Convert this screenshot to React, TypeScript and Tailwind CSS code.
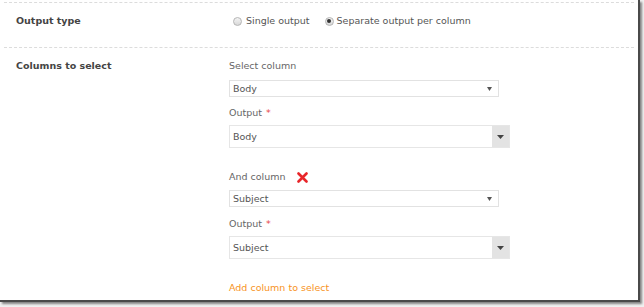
import React from "react";

const font = { fontFamily: '"DejaVu Sans", Verdana, sans-serif' };

function Radio({ checked }: { checked?: boolean }) {
  return (
    <span className="w-[9px] h-[9px] rounded-full border border-[#b5b5b5] bg-gradient-to-b from-[#f4f4f4] to-[#d8d8d8] flex items-center justify-center">
      {checked && <span className="w-[4px] h-[4px] rounded-full bg-[#333]" />}
    </span>
  );
}

function SmallSelect({ value }: { value: string }) {
  return (
    <div className="w-[270px] h-[17px] border border-[#e2e2e2] bg-white flex items-center justify-between pl-[3px] pr-[6px]">
      <span className="text-[#555]">{value}</span>
      <svg width="5" height="4" viewBox="0 0 5 4">
        <path d="M0 0h5L2.5 4z" fill="#555" />
      </svg>
    </div>
  );
}

function Combo({ value }: { value: string }) {
  return (
    <div className="w-[281px] h-[23px] border border-[#e6e6e6] bg-white flex">
      <span className="flex-1 flex items-center pl-[3px] text-[#555]">{value}</span>
      <span className="w-[17px] bg-[#e3e3e3] flex items-center justify-center">
        <svg width="7" height="4" viewBox="0 0 7 4">
          <path d="M0 0h7L3.5 4z" fill="#444" />
        </svg>
      </span>
    </div>
  );
}

function FieldLabel({ text, required }: { text: string; required?: boolean }) {
  return (
    <div className="h-4 flex items-center text-[#666]">
      {text}
      {required && <span className="ml-[4px] text-[#e8454a]">*</span>}
    </div>
  );
}

export default function App() {
  return (
    <div className="w-[644px] h-[307px] bg-[#f0f0f0] text-[9.5px] leading-4" style={font}>
      <div className="w-[640px] h-[302px] bg-white border-r-[2px] border-b-[2px] border-[#4a4a4a] shadow-[2px_2px_2px_rgba(0,0,0,0.45)] pt-[2px] px-[4px]">
        {/* OUTPUT TYPE */}
        <div className="border-t border-dashed border-[#dcdcdc] pt-[10px] pb-[18px] flex">
          <div className="w-[225px] pl-[12px] font-bold text-[#444]">Output type</div>
          <div className="ml-[4px] flex items-center text-[#555]">
            <Radio />
            <span className="ml-[4px]">Single output</span>
            <span className="ml-[15px]" />
            <Radio checked />
            <span className="ml-[3px]">Separate output per column</span>
          </div>
        </div>

        {/* COLUMNS */}
        <div className="border-t border-dashed border-[#dcdcdc] pt-[10px] flex">
          <div className="w-[225px] pl-[12px] font-bold text-[#444]">Columns to select</div>
          <div className="flex flex-col">
            <FieldLabel text="Select column" />
            <div className="mt-[6px]">
              <SmallSelect value="Body" />
            </div>
            <div className="mt-[8px]">
              <FieldLabel text="Output" required />
            </div>
            <div className="mt-[4px]">
              <Combo value="Body" />
            </div>

            <div className="mt-[21px] h-4 flex items-center text-[#666]">
              And column
              <svg className="ml-[11px]" width="11" height="11" viewBox="0 0 11 11">
                <path d="M1.5 1.5l8 8M9.5 1.5l-8 8" stroke="#e8262a" strokeWidth="2.6" strokeLinecap="round" />
              </svg>
            </div>
            <div className="mt-[5px]">
              <SmallSelect value="Subject" />
            </div>
            <div className="mt-[9px]">
              <FieldLabel text="Output" required />
            </div>
            <div className="mt-[4px]">
              <Combo value="Subject" />
            </div>

            <div className="mt-[21px] h-4 flex items-center text-[#f7931e]">Add column to select</div>
          </div>
        </div>
      </div>
    </div>
  );
}
